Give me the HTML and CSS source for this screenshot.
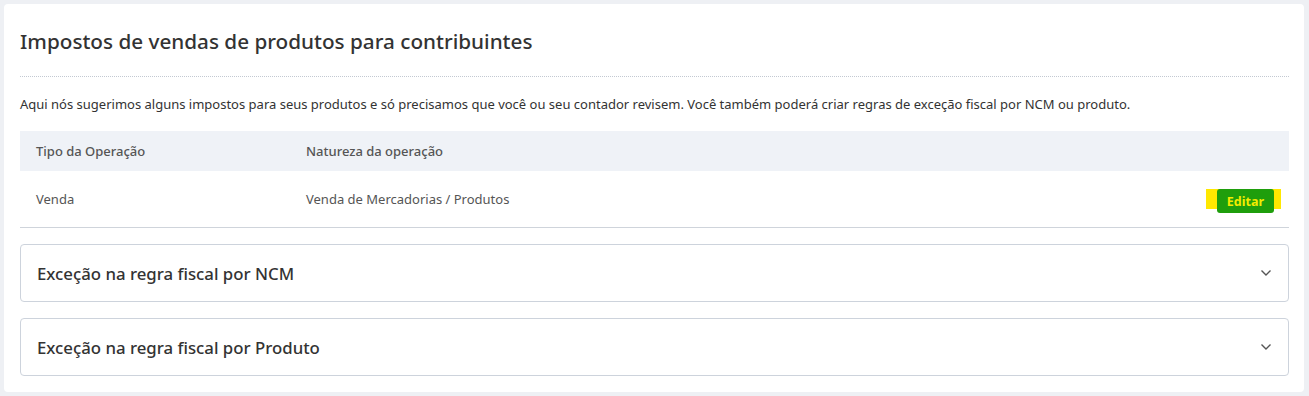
FILE: index.html
```html
<!DOCTYPE html>
<html lang="pt-BR">
<head>
    <meta charset="UTF-8">
    <meta name="viewport" content="width=device-width, initial-scale=1.0">
    <title>Impostos de vendas</title>
    <link rel="stylesheet" href="styles.css">
</head>
<body>
    <div class="card">
        <h2 class="card-title">Impostos de vendas de produtos para contribuintes</h2>
        <p class="card-info">Aqui nós sugerimos alguns impostos para seus produtos e só precisamos que você ou seu contador revisem. Você também poderá criar regras de exceção fiscal por NCM ou produto.</p>

        <table class="tax-table">
            <thead>
                <tr>
                    <th class="col-type">Tipo da Operação</th>
                    <th>Natureza da operação</th>
                    <th></th>
                </tr>
            </thead>
            <tbody>
                <tr>
                    <td class="col-type">Venda</td>
                    <td>Venda de Mercadorias / Produtos</td>
                    <td class="col-action">
                        <span class="highlight"><button class="btn-edit">Editar</button></span>
                    </td>
                </tr>
            </tbody>
        </table>

        <div class="accordion">
            <span>Exceção na regra fiscal por NCM</span>
            <svg class="chevron" width="12" height="8" viewBox="0 0 12 8"><path d="M1.5 1.5 6 6l4.5-4.5" fill="none" stroke="#555" stroke-width="1.4"/></svg>
        </div>
        <div class="accordion">
            <span>Exceção na regra fiscal por Produto</span>
            <svg class="chevron" width="12" height="8" viewBox="0 0 12 8"><path d="M1.5 1.5 6 6l4.5-4.5" fill="none" stroke="#555" stroke-width="1.4"/></svg>
        </div>
    </div>
</body>
</html>
```

FILE: styles.css
```css
body {
    margin: 0;
    padding: 4px 5px 5px 4px;
    background-color: #eef0f4;
    font-family: 'Noto Sans', 'Open Sans', sans-serif;
    color: #333;
}

.card {
    background-color: #fff;
    border-radius: 4px;
    padding: 22px 15px 16px 16px;
}

.card-title {
    margin: 0;
    font-size: 20.7px;
    font-weight: 500;
    line-height: 30px;
    color: #333;
    padding-bottom: 20px;
    border-bottom: 1px dotted #c3c9d2;
}

.card-info {
    margin: 0;
    padding: 17px 0 17px;
    font-size: 13px;
    line-height: 20px;
    color: #333;
}

.tax-table {
    width: 100%;
    border-collapse: collapse;
    font-size: 13px;
    color: #555;
}

.tax-table th {
    background-color: #eff2f7;
    text-align: left;
    font-weight: 500;
    height: 40px;
    padding: 0;
}

.tax-table td {
    height: 56px;
    padding: 0;
    border-bottom: 1px solid #cfd4db;
}

.tax-table .col-type {
    width: 270px;
    padding-left: 16px;
}

.col-action {
    text-align: right;
    padding-right: 8px !important;
}

.highlight {
    display: inline-block;
    background-color: #ffe800;
    height: 20px;
    padding: 0 7px 0 11px;
    vertical-align: middle;
}

.btn-edit {
    height: 24px;
    padding: 0 10px;
    border: none;
    border-radius: 3px;
    background-color: #1f9e0c;
    color: #f2ec00;
    font-family: inherit;
    font-size: 12.5px;
    font-weight: 700;
    display: block;
}

.accordion {
    display: flex;
    justify-content: space-between;
    align-items: center;
    height: 56px;
    margin-top: 16px;
    padding: 0 16px;
    border: 1px solid #cdd3dc;
    border-radius: 4px;
    font-size: 16.8px;
    font-weight: 500;
    color: #333;
}
```
